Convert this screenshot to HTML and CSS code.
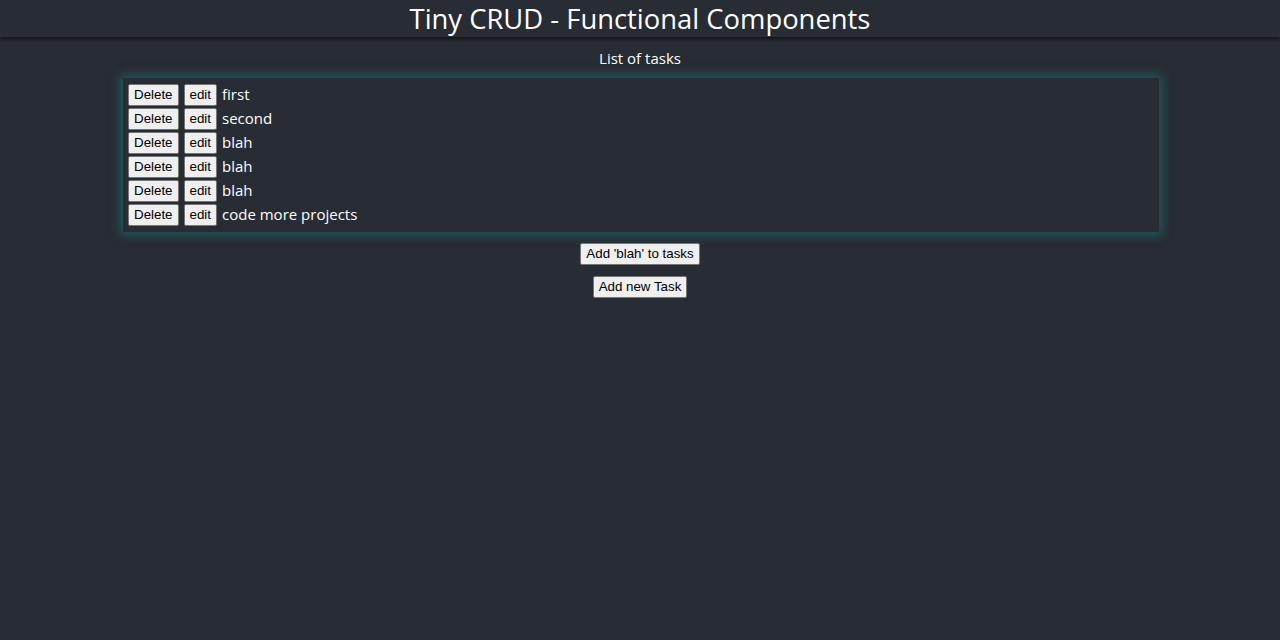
FILE: index.html
```html
<!DOCTYPE html>
<html>
<head>
<meta charset="utf-8">
<link rel="stylesheet" href="styles.css">
</head>
<body>
<header class="app-header"><h1 class="title">Tiny CRUD - Functional Components</h1></header>
<main class="main">
  <div class="list-title">List of tasks</div>
  <div class="task-box">
    <div class="task"><button class="btn">Delete</button><button class="btn">edit</button><span class="task-text">first</span></div>
    <div class="task"><button class="btn">Delete</button><button class="btn">edit</button><span class="task-text">second</span></div>
    <div class="task"><button class="btn">Delete</button><button class="btn">edit</button><span class="task-text">blah</span></div>
    <div class="task"><button class="btn">Delete</button><button class="btn">edit</button><span class="task-text">blah</span></div>
    <div class="task"><button class="btn">Delete</button><button class="btn">edit</button><span class="task-text">blah</span></div>
    <div class="task"><button class="btn">Delete</button><button class="btn">edit</button><span class="task-text">code more projects</span></div>
  </div>
  <button class="btn add-btn">Add 'blah' to tasks</button>
  <button class="btn add-btn">Add new Task</button>
</main>
</body>
</html>
```
FILE: styles.css
```css
html, body {
  margin: 0;
  padding: 0;
  background: #282c34;
  height: 100%;
}
body {
  font-family: "Open Sans", "Noto Sans", sans-serif;
  color: #ffffff;
}
.app-header {
  height: 37px;
  background: #282c34;
  box-shadow: 0 2px 4px rgba(0, 0, 0, 0.6);
  display: flex;
  justify-content: center;
  align-items: center;
  position: relative;
}
.title {
  margin: 0;
  font-weight: 400;
  font-size: 27.4px;
  line-height: 37px;
  letter-spacing: 0;
}
.main {
  display: flex;
  flex-direction: column;
  align-items: center;
}
.list-title {
  font-size: 15px;
  margin-top: 11px;
  line-height: 20px;
  height: 20px;
}
.task-box {
  align-self: flex-start;
  margin-left: 123px;
  margin-top: 10px;
  width: 1026px;
  padding: 5px 5px 5px 5px;
  box-shadow: 0 0 10px 3px rgba(30, 110, 110, 0.7);
  background: #282c34;
}
.task {
  display: flex;
  align-items: center;
  height: 24px;
}
.btn {
  font-family: "Liberation Sans", Arial, sans-serif;
  font-size: 13.33px;
  color: #000;
  background: #efefef;
  border: 1px solid #767676;
  border-radius: 2px;
  padding: 1px 5px;
  height: 22px;
  line-height: 18px;
  margin: 0;
}
.task .btn + .btn {
  margin-left: 5px;
}
.task-text {
  margin-left: 5px;
  font-size: 15px;
  line-height: 22px;
  position: relative;
  top: -1px;
}
.add-btn {
  margin-top: 11px;
}
```
